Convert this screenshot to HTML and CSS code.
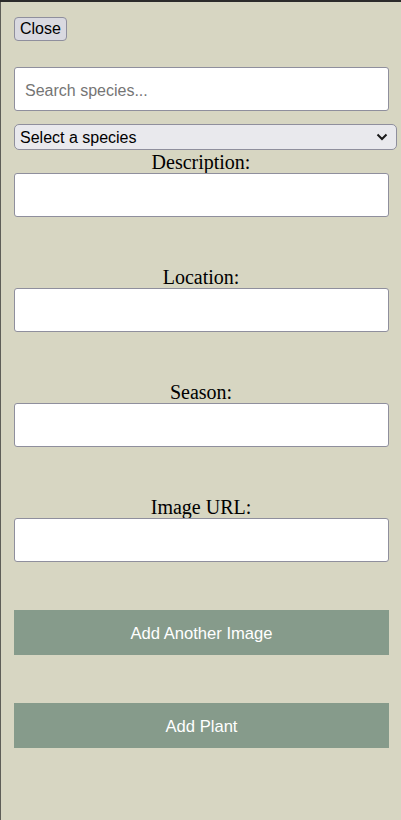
FILE: index.html
```html
<!DOCTYPE html>
<html>
<head>
<meta charset="utf-8">
<link rel="stylesheet" href="styles.css">
</head>
<body>
<div class="topbar"></div>
<div class="panel">
  <button class="close-btn">Close</button>
  <input class="search" type="text" placeholder="Search species...">
  <div class="select-wrap">
    <select class="species">
      <option>Select a species</option>
    </select>
    <svg class="chev" width="12" height="8" viewBox="0 0 12 8"><path d="M1.5 1.5 L6 6 L10.5 1.5" fill="none" stroke="#1a1a1a" stroke-width="2"/></svg>
  </div>
  <div class="field">
    <label class="lbl">Description:</label>
    <input class="txt" type="text">
  </div>
  <div class="field">
    <label class="lbl">Location:</label>
    <input class="txt" type="text">
  </div>
  <div class="field">
    <label class="lbl">Season:</label>
    <input class="txt" type="text">
  </div>
  <div class="field">
    <label class="lbl">Image URL:</label>
    <input class="txt" type="text">
  </div>
  <button class="action">Add Another Image</button>
  <button class="action">Add Plant</button>
</div>
</body>
</html>
```
FILE: styles.css
```css
html, body {
  margin: 0;
  padding: 0;
}
body {
  background: #5e5e58;
  width: 401px;
  height: 820px;
  overflow: hidden;
}
.topbar {
  height: 2px;
  background: #2b2b2b;
}
.panel {
  margin-left: 1px;
  width: 400px;
  height: 818px;
  background: #d7d6c2;
  box-sizing: border-box;
  padding: 15px 0 0 13px;
  display: flex;
  flex-direction: column;
  align-items: flex-start;
  font-family: "Liberation Serif", serif;
}
.close-btn {
  font-family: "Liberation Sans", Arial, sans-serif;
  font-size: 16px;
  color: #000;
  background: #d9d9e0;
  border: 1px solid #8f8f9d;
  border-radius: 4px;
  height: 24px;
  padding: 0 5px;
  margin: 0 0 26px 0;
  line-height: 20px;
}
.search {
  box-sizing: border-box;
  width: 375px;
  height: 44px;
  margin: 0 0 13px 0;
  padding: 3px 10px 0;
  font-family: "Liberation Sans", Arial, sans-serif;
  font-size: 16px;
  background: #fff;
  border: 1px solid #8f8f9d;
  border-radius: 3px;
  outline: none;
}
.search::placeholder {
  color: #757575;
}
.select-wrap {
  position: relative;
  width: 383px;
  height: 26px;
}
.species {
  appearance: none;
  -webkit-appearance: none;
  box-sizing: border-box;
  width: 383px;
  height: 26px;
  margin: 0;
  padding: 1px 0 0 5px;
  font-family: "Liberation Sans", Arial, sans-serif;
  font-size: 16px;
  color: #000;
  background: #e9e9ed;
  border: 1px solid #8f8f9d;
  border-radius: 5px;
}
.chev {
  position: absolute;
  right: 9px;
  top: 9px;
  pointer-events: none;
}
.field {
  display: flex;
  flex-direction: column;
  align-items: flex-start;
  margin-bottom: 48px;
}
.lbl {
  display: block;
  width: 400px;
  margin-left: -13px;
  padding-top: 1px;
  box-sizing: border-box;
  text-align: center;
  font-size: 20px;
  line-height: 22px;
  height: 23px;
  color: #000;
}
.txt {
  box-sizing: border-box;
  width: 375px;
  height: 44px;
  margin: 0;
  padding: 0 10px;
  font-size: 16px;
  background: #fff;
  border: 1px solid #8f8f9d;
  border-radius: 3px;
}
.action {
  box-sizing: border-box;
  width: 375px;
  height: 45px;
  margin: 0 0 48px 0;
  border: none;
  background: #869b8b;
  color: #fff;
  font-family: "Liberation Sans", Arial, sans-serif;
  font-size: 16.6px;
  padding: 2px 0 0;
}
```
